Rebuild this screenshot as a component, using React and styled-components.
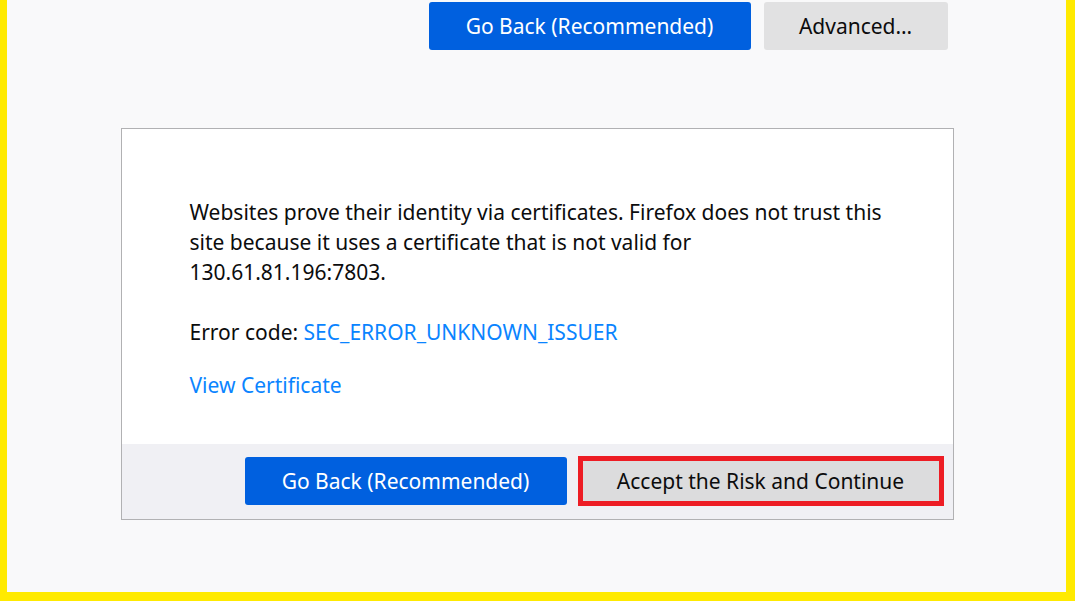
import React from 'react';
import styled, { createGlobalStyle } from 'styled-components';

const GlobalStyle = createGlobalStyle`
  html, body {
    margin: 0;
    padding: 0;
    background: #f9f9fa;
  }
  body {
    font-family: "Noto Sans", "Open Sans", sans-serif;
    color: #0c0c0d;
  }
`;

const Frame = styled.div`
  box-sizing: border-box;
  height: 601px;
  width: 1075px;
  background: #f9f9fa;
  border-left: 7px solid #ffea00;
  border-right: 9px solid #ffea00;
  border-bottom: 9px solid #ffea00;
  padding-left: 1px;
  display: flex;
  flex-direction: column;
  align-items: center;
`;

const Column = styled.div`
  width: 833px;
  display: flex;
  flex-direction: column;
`;

const TopActions = styled.div`
  display: flex;
  justify-content: flex-end;
  gap: 13px;
  padding: 2px 6px 0 0;
`;

const Button = styled.button`
  box-sizing: border-box;
  height: ${p => p.$tall ? 50 : 48}px;
  border: none;
  border-radius: 3px;
  font-family: inherit;
  font-size: 21px;
  padding: 0;
  cursor: pointer;
  background: ${p => p.$primary ? '#0060df' : '#e1e1e2'};
  color: ${p => p.$primary ? '#fff' : '#0c0c0d'};
  width: ${p => p.$w}px;
  margin-top: ${p => p.$offset || 0}px;
`;

const RiskButton = styled(Button)`
  border: 5px solid #ed1c24;
  border-radius: 0;
  background: #dcdcdd;
`;

const Card = styled.div`
  margin-top: 78px;
  border: 1px solid #b1b1b3;
  background: #fff;
  display: flex;
  flex-direction: column;
`;

const Body = styled.div`
  padding: 68px 60px 44px 68px;
  font-size: 21px;
  line-height: 30px;
`;

const Para = styled.p`
  margin: 0 0 ${p => p.$gap || 0}px 0;
`;

const Link = styled.a`
  color: #0a84ff;
  text-decoration: none;
`;

const Footer = styled.div`
  background: #f0f0f4;
  height: 75px;
  box-sizing: border-box;
  display: flex;
  justify-content: flex-end;
  align-items: flex-start;
  padding: 12px 9px 0 0;
  gap: 11px;
`;

export default function App() {
  return (
    <>
      <GlobalStyle />
      <Frame>
        <Column>
          <TopActions>
            <Button $primary $w={322}>Go Back (Recommended)</Button>
            <Button $w={184}>Advanced…</Button>
          </TopActions>
          <Card>
            <Body>
              <Para $gap={30}>
                Websites prove their identity via certificates. Firefox does not trust this<br />
                site because it uses a certificate that is not valid for<br />
                130.61.81.196:7803.
              </Para>
              <Para $gap={23}>
                Error code: <Link href="#">SEC_ERROR_UNKNOWN_ISSUER</Link>
              </Para>
              <Para>
                <Link href="#">View Certificate</Link>
              </Para>
            </Body>
            <Footer>
              <Button $primary $w={322} $offset={1}>Go Back (Recommended)</Button>
              <RiskButton $tall $w={366}>Accept the Risk and Continue</RiskButton>
            </Footer>
          </Card>
        </Column>
      </Frame>
    </>
  );
}
